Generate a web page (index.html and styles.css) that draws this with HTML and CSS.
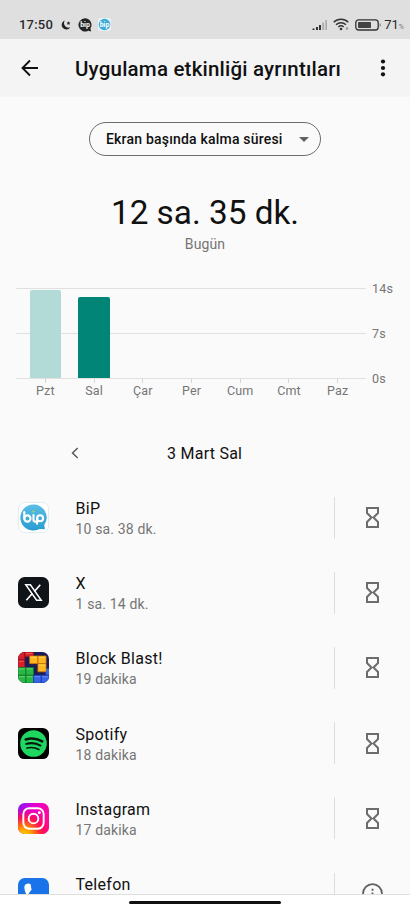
FILE: index.html
```html
<!DOCTYPE html>
<html lang="tr">
<head>
<meta charset="utf-8">
<title>Uygulama etkinliği ayrıntıları</title>
<link rel="stylesheet" href="styles.css">
</head>
<body>
<svg class="defs" width="0" height="0" aria-hidden="true">
  <symbol id="hourglass" viewBox="0 0 13 21"><path d="M1 1h11v5L7.500 10.500 12 15v5H1v-5l4.500-4.500L1 6z" fill="none" stroke="#6c6c6c" stroke-width="2"/></symbol>
</svg>
<div class="screen">
  <div class="status">
    <span class="clock">17:50</span>
    <svg class="moon" width="10" height="10" viewBox="0 0 10 10"><path d="M4 .5A4.600 4.600 0 1 0 9.300 7.200 4.400 4.400 0 0 1 4 .5z" fill="#222"/><path d="M7.500 1.200l.6 1.200 1.300.2-.9.9.2 1.300-1.200-.6-1.200.6.2-1.300-.9-.9 1.300-.2z" fill="#222"/></svg>
    <svg class="chat-dark" width="14" height="14" viewBox="0 0 14 14"><path d="M7 .3a6.600 6.600 0 1 0 3.200 12.400l3 .8-.8-3A6.600 6.600 0 0 0 7 .3z" fill="#252525"/><text x="7" y="9" class="bip-mini">bip</text></svg>
    <svg class="chat-blue" width="13" height="13" viewBox="0 0 13 13"><rect width="13" height="13" rx="3" fill="#e8f3f8"/><circle cx="6.500" cy="6.500" r="5.800" fill="#3caad7"/><text x="6.500" y="8.500" class="bip-mini">bip</text></svg>
    <div class="indicators">
      <svg width="16" height="12" viewBox="0 0 16 12"><path d="M.5 9.500h2V11h-2zM4 8h2v3H4zM7 6h2v5H7z" fill="#333"/><path d="M10.300 3.500h1.800V11h-1.800zM13.400 1h1.600v10h-1.600z" fill="#aaa"/></svg>
      <svg class="wifi" width="17" height="13" viewBox="0 0 17 13"><g fill="none" stroke="#333" stroke-width="1.400"><path d="M.7 4.200a10.500 10.500 0 0 1 14.600 0M3 6.700a7.200 7.200 0 0 1 10 0M5.300 9a4 4 0 0 1 5.400 0"/></g><circle cx="8" cy="11" r="1.300" fill="#333"/><path d="M14 8.700l1.500 1.800L14 12.300l-1.500-1.800z" fill="#999"/></svg>
      <svg class="battery" width="27" height="12" viewBox="0 0 27 12"><rect x=".8" y=".8" width="22.400" height="10.200" rx="2.800" fill="none" stroke="#333" stroke-width="1.300"/><rect x="3" y="3" width="13" height="6" rx=".7" fill="#444"/><path d="M24.600 4.200c1.500.2 1.500 3.300 0 3.500z" fill="#777"/></svg>
      <span class="charge">71<small>%</small></span>
    </div>
  </div>

  <header class="appbar">
    <svg class="back" width="18" height="18" viewBox="0 0 18 18"><path d="M17 9H2M9 1.500L1.500 9 9 16.500" fill="none" stroke="#111" stroke-width="1.900"/></svg>
    <h1>Uygulama etkinliği ayrıntıları</h1>
    <svg class="more" width="6" height="18" viewBox="0 0 6 18"><g fill="#111"><circle cx="3" cy="2.500" r="2.100"/><circle cx="3" cy="9" r="2.100"/><circle cx="3" cy="15.300" r="2.100"/></g></svg>
  </header>

  <main>
    <button class="picker"><span>Ekran başında kalma süresi</span><i class="caret"></i></button>
    <div class="total">12 sa. 35 dk.</div>
    <div class="today">Bugün</div>

    <section class="chart">
      <div class="plot">
        <div class="day"><div class="bar bar-light"></div></div>
        <div class="day"><div class="bar bar-dark"></div></div>
        <div class="day"></div><div class="day"></div><div class="day"></div><div class="day"></div><div class="day"></div>
      </div>
      <div class="scale"><span>14s</span><span>7s</span><span>0s</span></div>
      <div class="days"><span>Pzt</span><span>Sal</span><span>Çar</span><span>Per</span><span>Cum</span><span>Cmt</span><span>Paz</span></div>
    </section>

    <div class="date">
      <svg class="prev" width="8" height="12" viewBox="0 0 8 12"><path d="M6.700 1L1.500 6l5.200 5" fill="none" stroke="#555" stroke-width="1.400"/></svg>
      <span>3 Mart Sal</span>
    </div>

    <ul class="apps">
      <li>
        <svg class="icon" viewBox="0 0 32 32"><defs><linearGradient id="sky" x2="0" y2="1"><stop stop-color="#5bbfe6"/><stop offset="1" stop-color="#2a9bd0"/></linearGradient></defs><rect x=".5" y=".5" width="31" height="31" rx="6.500" fill="#fff" stroke="#e1eaf0"/><path d="M16 2.500a13.500 13.500 0 1 0 6.300 25.400l5.500.1-.7-4.300A13.500 13.500 0 0 0 16 2.500z" fill="url(#sky)"/><g fill="none" stroke="#fff" stroke-width="2.200" stroke-linecap="round"><path d="M6.500 10.500v6.500"/><circle cx="9.700" cy="17" r="3.200"/><path d="M16 13.500v5.200q0 1.500 1.500 1.500h1.500M19.700 22.500v-5.500"/><circle cx="22.800" cy="16.800" r="3.100"/></g><circle cx="16" cy="9.800" r="1.100" fill="#b5d94c"/></svg>
        <div class="info"><b>BiP</b><span>10 sa. 38 dk.</span></div>
        <div class="limit"><svg class="glass"><use href="#hourglass"/></svg></div>
      </li>
      <li>
        <svg class="icon" viewBox="0 0 32 32"><rect width="32" height="32" rx="7" fill="#0f1419"/><path d="M8 8h4.800L24 24h-4.800z" fill="none" stroke="#fff" stroke-width="1.500"/><path d="M23 8l-6.100 7M14.800 17.100L8.600 24" stroke="#fff" stroke-width="1.700"/></svg>
        <div class="info"><b>X</b><span>1 sa. 14 dk.</span></div>
        <div class="limit"><svg class="glass"><use href="#hourglass"/></svg></div>
      </li>
      <li>
        <svg class="icon" viewBox="0 0 32 32"><defs><clipPath id="tile"><rect width="32" height="32" rx="7"/></clipPath></defs><g clip-path="url(#tile)"><path fill="#1c1b57" d="M0 0h32v32H0z"/><g stroke-width=".7"><path d="M0 0h7v8H0zM7 0h9v5H7zM0 8h7v8H0z" fill="#d8202a" stroke="#8d1020"/><path d="M0 16h8v8H0zM8 16h8v8H8zM0 24h8v8H0zM8 24h8v8H8z" fill="#29b845" stroke="#13792c"/><path d="M16 24h8v8h-8zM24 24h8v8h-8zM28.500 17h4v7h-4z" fill="#3564e5" stroke="#183ba7"/><path d="M12 4h8.500v8H12zM20.500 4H29v8h-8.500zM20.500 12H29v8.500h-8.500z" fill="#ffb71d" stroke="#bc6d09"/></g><path d="M13 5.500h6M21.500 5.500H28M21.500 13.500H28" stroke="#ffd75c"/><path d="M1 17.500h6M9 17.500h6M1 25.500h6M9 25.500h6" stroke="#64d56d"/><path d="M1 9.500h5M8 1.500h7" stroke="#f35a50"/><path d="M17 25.500h6M25 25.500h6" stroke="#688cf4"/></g></svg>
        <div class="info"><b>Block Blast!</b><span>19 dakika</span></div>
        <div class="limit"><svg class="glass"><use href="#hourglass"/></svg></div>
      </li>
      <li>
        <svg class="icon" viewBox="0 0 32 32"><rect width="32" height="32" rx="6.500" fill="#000"/><circle cx="16" cy="16" r="13.700" fill="#1ed760"/><g fill="none" stroke="#07150b" stroke-linecap="round"><path d="M8 11.800q9-2.500 17 2" stroke-width="2.600"/><path d="M8.500 16.400q8-2.200 14.700 1.700" stroke-width="2.100"/><path d="M9.300 20.700q6.500-1.700 12.300 1.500" stroke-width="1.700"/></g></svg>
        <div class="info"><b>Spotify</b><span>18 dakika</span></div>
        <div class="limit"><svg class="glass"><use href="#hourglass"/></svg></div>
      </li>
      <li>
        <svg class="icon" viewBox="0 0 32 32"><defs><linearGradient id="pink" x1="0" y1="0" x2="1" y2=".5"><stop stop-color="#7a18fa"/><stop offset=".45" stop-color="#e600cf"/><stop offset="1" stop-color="#ff0b93"/></linearGradient><radialGradient id="sun" cx=".2" cy="1.050" r=".9"><stop stop-color="#ffdc00"/><stop offset=".3" stop-color="#ff8f00"/><stop offset=".65" stop-color="#ff153f" stop-opacity=".85"/><stop offset="1" stop-color="#ff0069" stop-opacity="0"/></radialGradient></defs><rect width="32" height="32" rx="7" fill="url(#pink)"/><rect width="32" height="32" rx="7" fill="url(#sun)"/><g fill="none" stroke="#fff" stroke-width="2"><rect x="5.500" y="5.500" width="21" height="21" rx="6"/><circle cx="16" cy="16" r="5"/></g><circle cx="22" cy="10" r="1.500" fill="#fff"/></svg>
        <div class="info"><b>Instagram</b><span>17 dakika</span></div>
        <div class="limit"><svg class="glass"><use href="#hourglass"/></svg></div>
      </li>
      <li>
        <svg class="icon" viewBox="0 0 32 32"><rect width="32" height="32" rx="7" fill="#1a73e8"/><path d="M8 6.500q3-1.500 5 0l1 5.500-3 4q2 4 5 5.500l3.500-3 5.500 1v5q-2 2-5 1.500Q8 22 6.500 10q0-2.500 1.500-3.500z" fill="#fff"/></svg>
        <div class="info"><b>Telefon</b><span></span></div>
        <div class="limit"><svg width="21" height="21" viewBox="0 0 22 22"><circle cx="11" cy="11" r="9.900" fill="none" stroke="#616161" stroke-width="1.900"/><path d="M10 6h2v2h-2zM10 10h2v6h-2z" fill="#616161"/></svg></div>
      </li>
    </ul>
  </main>
  <footer class="nav"><div class="pill"></div></footer>
</div>
</body>
</html>
```
FILE: styles.css
```css
* { box-sizing: border-box; }
body { margin: 0; background: #fafafa; color: #111; font-family: Roboto, sans-serif; }
svg { display: block; flex: none; }
.defs { position: absolute; }
.screen { width: 410px; height: 911px; display: flex; flex-direction: column; overflow: hidden; }

.status { flex: none; height: 39px; padding: 10px 6px 0 19px; display: flex; align-items: center; background: #dfdfdf; color: #2a2a2a; }
.clock { width: 42px; font-size: 13px; font-weight: 500; letter-spacing: .2px; }
.chat-dark { margin-left: 7px; }
.chat-blue { margin-left: 6px; }
.bip-mini { font: 700 7px Roboto, sans-serif; fill: #fff; text-anchor: middle; }
.indicators { margin-left: auto; display: flex; align-items: center; }
.wifi { margin-left: 5px; }
.battery { margin-left: 5px; }
.charge { margin: 2px 0 0 2px; font-size: 13px; line-height: 15px; }
.charge small { font-size: 7px; color: #777; }

.appbar { flex: none; height: 58px; padding: 0 24px 0 21px; display: flex; align-items: center; background: #f4f4f4; }
.appbar h1 { margin: 2px auto 0 36px; font-size: 20.5px; line-height: 24px; font-weight: 500; letter-spacing: .2px; white-space: nowrap; }

main { flex: none; height: 797px; overflow: hidden; display: flex; flex-direction: column; }
main > * { flex: none; }
.picker { align-self: center; width: 232px; height: 34px; margin: 25px 0 0; padding: 0 11px 0 16px; display: flex; align-items: center; justify-content: space-between; border: 1px solid #6d6d6d; border-radius: 17px; background: transparent; color: #111; font: 500 14px Roboto, sans-serif; letter-spacing: .2px; white-space: nowrap; }
.caret { border: 5px solid transparent; border-top-color: #616161; border-bottom: 0; }
.total { margin-top: 36px; height: 42px; text-align: center; font-size: 33.3px; line-height: 42px; }
.today { margin-top: 1px; text-align: center; font-size: 14px; line-height: 18px; color: #757575; letter-spacing: .1px; }

.chart { margin: 35px 0 0 16px; display: grid; grid-template-columns: 350px 1fr; }
.plot { height: 91px; padding: 0 4px 0 5px; display: flex; align-items: flex-end; background: linear-gradient(#e0e0e0, #e0e0e0) 0 0 / 100% 1px no-repeat, linear-gradient(#e0e0e0, #e0e0e0) 0 45px / 100% 1px no-repeat, linear-gradient(#e0e0e0, #e0e0e0) 0 90px / 100% 1px no-repeat; }
.day { flex: 1; display: flex; justify-content: center; padding-bottom: 1px; }
.bar { width: 31.5px; border-radius: 2px 2px 0 0; }
.bar-light { height: 88px; background: #b2dbd7; }
.bar-dark { height: 81px; background: #008577; }
.scale { height: 104px; margin-top: -6px; padding-left: 6px; display: flex; flex-direction: column; justify-content: space-between; font-size: 12.5px; line-height: 14px; color: #757575; letter-spacing: .2px; }
.days { margin-top: -7px; padding: 0 4px 0 5px; display: flex; }
.days span { flex: 1; display: flex; flex-direction: column; align-items: center; font-size: 12.5px; line-height: 14px; color: #757575; letter-spacing: .1px; }
.days span::before { content: ""; width: 1px; height: 4px; margin-bottom: 1px; background: #d5d5d5; }

.date { height: 24px; margin-top: 43px; padding-left: 71px; display: flex; align-items: center; font-size: 16px; letter-spacing: .25px; }
.date span { margin-left: 88px; }

.apps { margin: 15px 0 0; padding: 0; list-style: none; }
.apps li { height: 75.2px; padding-left: 18px; display: flex; align-items: center; }
.icon { width: 31px; height: 31px; }
.info { margin: 2px 0 0 26.500px; display: flex; flex-direction: column; gap: 1px; }
.info b { font-size: 16px; line-height: 20px; font-weight: 400; letter-spacing: .3px; }
.info span { height: 18px; font-size: 14px; line-height: 18px; color: #757575; letter-spacing: .15px; }
.limit { width: 76px; height: 42px; margin-left: auto; padding-right: 1px; display: flex; align-items: center; justify-content: center; border-left: 1px solid #dedede; }
.glass { width: 13px; height: 21px; }

.nav { flex: none; height: 17px; padding-top: 6px; display: flex; justify-content: center; background: #fff; border-top: 1px solid #dedede; }
.pill { width: 152px; height: 3px; border-radius: 2px; background: #111; }
```
